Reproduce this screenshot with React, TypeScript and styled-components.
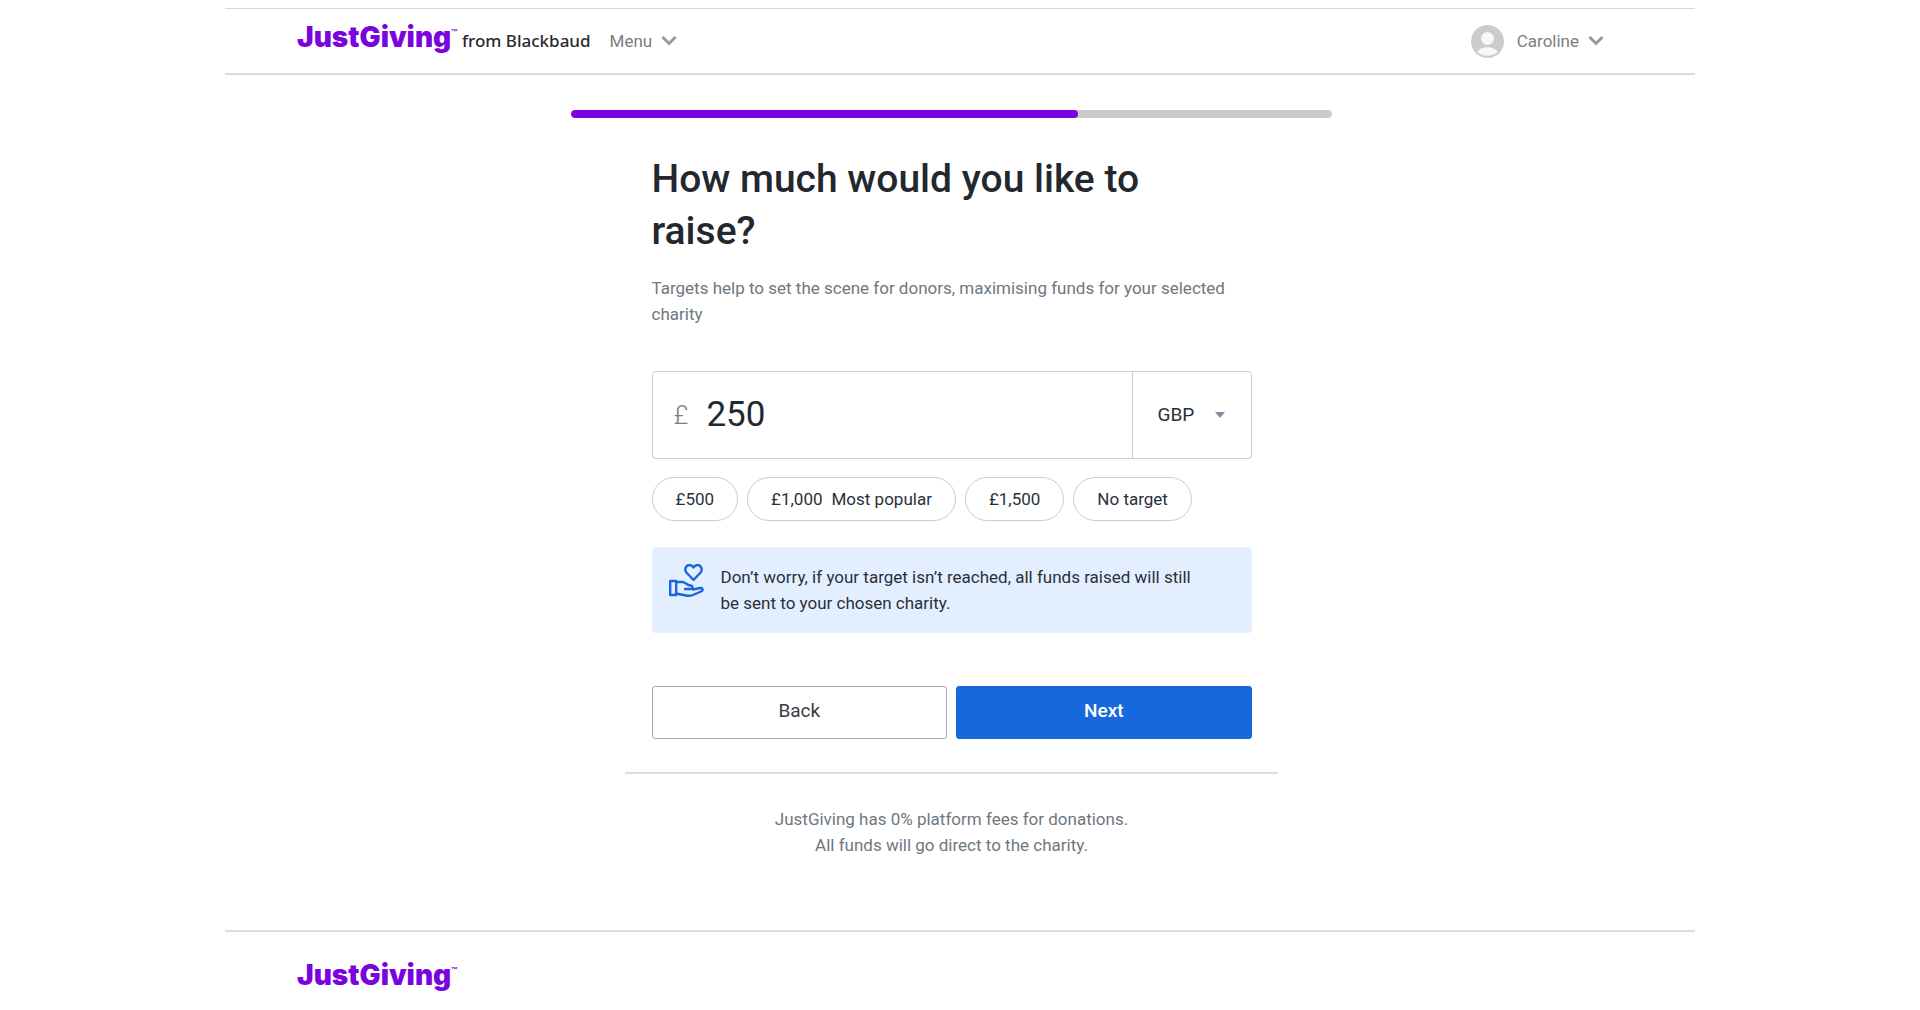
import React, { useState } from "react";
import styled, { createGlobalStyle } from "styled-components";

const GlobalStyle = createGlobalStyle`
  *, *::before, *::after { box-sizing: border-box; }
  body {
    margin: 0;
    background: #ffffff;
    color: #2b3038;
    font-family: Roboto, "Liberation Sans", sans-serif;
    font-size: 17px;
    line-height: 26px;
  }
  button, input, select { font: inherit; color: inherit; }
`;

const Page = styled.div`
  max-width: 1470px;
  margin: 0 auto;
  padding-top: 8px;
`;

const Header = styled.header`
  display: flex;
  align-items: center;
  justify-content: space-between;
  height: 67px;
  padding: 0 91px 0 72px;
  border-top: 1px solid #d9d9d9;
  border-bottom: 2px solid #d9d9d9;
`;

const HeaderGroup = styled.div`
  display: flex;
  align-items: center;
  gap: 19px;
`;

const Brand = styled.a`
  display: inline-flex;
  align-items: baseline;
  color: #7a04dd;
  text-decoration: none;
`;

const Wordmark = styled.svg`
  display: block;
  width: 161px;
  height: 32px;
  overflow: visible;
  fill: currentColor;
  font-family: Inter, "Open Sans", sans-serif;
  font-weight: 900;
`;

const BrandLine = styled.div`
  display: flex;
  align-items: center;
  gap: 4px;
`;

const Owner = styled.span`
  color: #2a2a30;
  font-family: "Noto Sans", "Open Sans", sans-serif;
  font-weight: 500;
`;

const NavButton = styled.button`
  display: flex;
  align-items: center;
  gap: 9px;
  padding: 0;
  border: 0;
  background: none;
  color: #7d7d82;
  cursor: pointer;
`;

const Avatar = styled.svg`
  width: 33px;
  height: 33px;
  margin-right: 4px;
`;

const Main = styled.main`
  display: flex;
  flex-direction: column;
  align-items: center;
  padding: 35px 17px 0 0;
`;

const Progress = styled.div`
  width: 100%;
  max-width: 761px;
  height: 8px;
  border-radius: 4px;
  background: #cccccc;
  overflow: hidden;
`;

const ProgressFill = styled.div`
  height: 100%;
  border-radius: 4px;
  background: #7a04dd;
`;

const Form = styled.form`
  width: 100%;
  max-width: 600px;
  padding: 35px 0 33px;
`;

const Title = styled.h1`
  margin: 0;
  color: #23282f;
  font-size: 39px;
  line-height: 52px;
  font-weight: 500;
`;

const Lead = styled.p`
  margin: 18px 0 44px;
  color: #6f7780;
`;

const AmountBox = styled.div`
  display: flex;
  align-items: stretch;
  height: 88px;
  border: 1px solid #cccccc;
  border-radius: 4px;
`;

const Amount = styled.label`
  display: flex;
  flex: 1;
  min-width: 0;
  align-items: center;
  gap: 18px;
  padding-left: 21px;
`;

const CurrencySign = styled.span`
  color: #75808c;
  font-size: 26px;
  font-weight: 300;
`;

const AmountInput = styled.input`
  flex: 1;
  min-width: 0;
  padding: 0;
  border: 0;
  outline: 0;
  background: none;
  color: #23282f;
  font-size: 35px;
  line-height: 44px;
`;

const Currency = styled.label`
  display: flex;
  flex: none;
  align-items: center;
  width: 119px;
  padding: 0 26px 0 25px;
  border-left: 1px solid #cccccc;
`;

const CurrencySelect = styled.select`
  flex: 1;
  min-width: 0;
  padding: 0;
  border: 0;
  outline: 0;
  appearance: none;
  background: none;
  font-size: 19px;
`;

const Chips = styled.div`
  display: flex;
  flex-wrap: wrap;
  gap: 9px;
  margin: 18px 0 26px;
`;

const Chip = styled.button`
  display: flex;
  gap: 9px;
  padding: 8px 23px;
  border: 1px solid #cccccc;
  border-radius: 22px;
  background: #ffffff;
  cursor: pointer;
`;

const Notice = styled.div`
  display: flex;
  gap: 17px;
  padding: 17px 44px 17px 17px;
  border-radius: 4px;
  background: #e3efff;

  svg { flex: none; }
`;

const NoticeText = styled.p`
  margin: 0;
`;

const Actions = styled.div`
  display: grid;
  grid-template-columns: 1fr 1fr;
  gap: 9px;
  margin-top: 53px;
`;

const ActionButton = styled.button<{ $primary?: boolean }>`
  height: 53px;
  padding: 0 16px 4px;
  border: ${(p) => (p.$primary ? "1px solid #1668dc" : "1px solid #aaaaaa")};
  border-radius: 3px;
  background: ${(p) => (p.$primary ? "#1668dc" : "#ffffff")};
  color: ${(p) => (p.$primary ? "#ffffff" : "#3a3d42")};
  font-size: 19px;
  font-weight: ${(p) => (p.$primary ? 500 : 400)};
  cursor: pointer;
`;

const Fees = styled.p`
  width: 100%;
  max-width: 653px;
  margin: 0 0 72px;
  padding-top: 32px;
  border-top: 2px solid #dddddd;
  color: #6f7780;
  text-align: center;
`;

const Footer = styled.footer`
  padding: 31px 72px;
  border-top: 2px solid #dddddd;
`;

function Logo() {
  return (
    <Wordmark viewBox="0 0 161 32" role="img" aria-label="JustGiving">
      <text x="0" y="22" fontSize="28">JustGiving</text>
      <text x="154" y="9" fontSize="7" fontFamily="Liberation Sans" fontWeight="700">™</text>
    </Wordmark>
  );
}

function Chevron() {
  return (
    <svg width="16" height="12" viewBox="0 0 16 12" fill="none" stroke="#999999" strokeWidth="3" aria-hidden="true">
      <path d="M1.5 2 8 8.5 14.5 2" />
    </svg>
  );
}

function HandHeart() {
  return (
    <svg width="35" height="34" viewBox="0 0 35 34" fill="none" stroke="#1668dc" strokeWidth="2.4" strokeLinejoin="round" strokeLinecap="round" aria-hidden="true">
      <path d="M24.500 16 17.400 8.500C15.300 6 16.400 1 20.300 1c2 0 3.300 1 4.200 2.500C25.400 2 26.700 1 28.700 1c3.900 0 5 5 2.900 7.500z" />
      <path d="M1.200 17h6v14h-6zM7 18h6.500c2.500 0 4.500 3.500 8 3.500 3 0 2.500 3.500 0 3.500H16M24 25.500l7-1.500c3-.5 3.500 2.500 1 3.500l-8 3.500c-2.500 1-4.500 1-7 .5L7 29.500" />
    </svg>
  );
}

const suggestions = [
  { label: "£500", value: "500" },
  { label: "£1,000", value: "1,000", note: "Most popular" },
  { label: "£1,500", value: "1,500" },
  { label: "No target", value: "" },
];

export default function App() {
  const [amount, setAmount] = useState("250");
  const progress = 2 / 3;

  return (
    <>
      <GlobalStyle />
      <Page>
        <Header>
          <HeaderGroup>
            <BrandLine>
              <Brand href="#"><Logo /></Brand>
              <Owner>from Blackbaud</Owner>
            </BrandLine>
            <NavButton type="button">Menu <Chevron /></NavButton>
          </HeaderGroup>
          <NavButton type="button">
            <Avatar viewBox="0 0 33 33" aria-hidden="true">
              <circle cx="16.500" cy="16.500" r="16.500" fill="#cccccc" />
              <circle cx="16.500" cy="13.500" r="6.500" fill="#f7f7f7" />
              <path d="M6.500 27c2-6.500 18-6.500 20 0-5 5-15 5-20 0z" fill="#f7f7f7" />
            </Avatar>
            Caroline <Chevron />
          </NavButton>
        </Header>
        <Main>
          <Progress role="progressbar" aria-label="Progress" aria-valuenow={67}>
            <ProgressFill style={{ width: `${progress * 100}%` }} />
          </Progress>
          <Form onSubmit={(e) => e.preventDefault()}>
            <Title>How much would you like to raise?</Title>
            <Lead>Targets help to set the scene for donors, maximising funds for your selected charity</Lead>
            <AmountBox>
              <Amount>
                <CurrencySign>£</CurrencySign>
                <AmountInput aria-label="Target amount" value={amount} onChange={(e) => setAmount(e.target.value)} />
              </Amount>
              <Currency>
                <CurrencySelect aria-label="Currency" defaultValue="GBP">
                  <option>GBP</option>
                </CurrencySelect>
                <svg width="10" height="6" viewBox="0 0 10 6" fill="#858ba0" aria-hidden="true"><path d="M0 0h10L5 6z" /></svg>
              </Currency>
            </AmountBox>
            <Chips>
              {suggestions.map((s) => (
                <Chip key={s.label} type="button" onClick={() => setAmount(s.value)}>
                  <span>{s.label}</span>
                  {s.note && <span>{s.note}</span>}
                </Chip>
              ))}
            </Chips>
            <Notice>
              <HandHeart />
              <NoticeText>
                Don’t worry, if your target isn’t reached, all funds raised will still be sent to your chosen charity.
              </NoticeText>
            </Notice>
            <Actions>
              <ActionButton type="button">Back</ActionButton>
              <ActionButton type="submit" $primary>Next</ActionButton>
            </Actions>
          </Form>
          <Fees>
            JustGiving has 0% platform fees for donations.<br />
            All funds will go direct to the charity.
          </Fees>
        </Main>
        <Footer>
          <Brand href="#"><Logo /></Brand>
        </Footer>
      </Page>
    </>
  );
}
